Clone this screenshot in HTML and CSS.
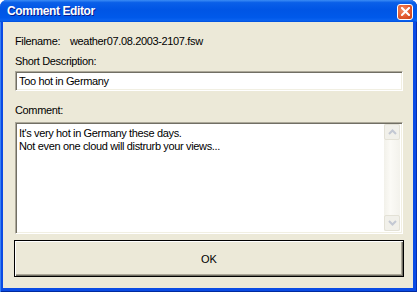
FILE: index.html
```html
<!DOCTYPE html>
<html lang="en">
<head>
  <meta charset="UTF-8" />
  <title>Comment Editor</title>
  <link rel="stylesheet" href="styles.css">
</head>
<body>
  <div class="window">
    <div class="titlebar">
      <span class="title">Comment Editor</span>
      <button class="close" aria-label="Close">
        <svg width="9" height="9" viewBox="0 0 9 9">
          <path d="M1 1 L8 8 M8 1 L1 8" stroke="#fff" stroke-width="2" stroke-linecap="square" />
        </svg>
      </button>
    </div>

    <div class="client">
      <div class="file-row">
        <span class="file-label">Filename:</span>
        <span>weather07.08.2003-2107.fsw</span>
      </div>

      <label class="label label-short" for="shortDesc">Short Description:</label>
      <input class="field" id="shortDesc" type="text" value="Too hot in Germany">

      <label class="label label-comment">Comment:</label>
      <div class="comment-box">
        <div class="comment-text">It's very hot in Germany these days.<br>Not even one cloud will distrurb your views...</div>
        <div class="scrollbar">
          <div class="scroll-btn">
            <svg width="9" height="6" viewBox="0 0 9 6"><path d="M1 5 L4.5 1.5 L8 5" fill="none" stroke="#c3c8d3" stroke-width="2" /></svg>
          </div>
          <div class="scroll-track"></div>
          <div class="scroll-btn">
            <svg width="9" height="6" viewBox="0 0 9 6"><path d="M1 1 L4.5 4.5 L8 1" fill="none" stroke="#c3c8d3" stroke-width="2" /></svg>
          </div>
        </div>
      </div>

      <button class="ok-btn">OK</button>
    </div>
  </div>
</body>
</html>
```

FILE: styles.css
```css
body {
  margin: 0;
  font-family: 'Liberation Sans', Arial, sans-serif;
  font-size: 11px;
  letter-spacing: -0.35px;
  color: #000;
  background: #fff;
}

.window {
  width: 417px;
  height: 292px;
  box-sizing: border-box;
  display: flex;
  flex-direction: column;
  background: #0a4be4;
  border-radius: 7px 7px 0 0;
  box-shadow: inset 1px 0 #3a80f3, inset -1px 0 #002fb8, inset 0 -1px #002a9e;
  overflow: hidden;
}

.titlebar {
  height: 22px;
  flex: none;
  display: flex;
  align-items: center;
  padding: 0 4px 0 7px;
  background: linear-gradient(to bottom, #3b8cf5 0%, #0a5fe8 12%, #0055e5 45%, #0059ea 80%, #0a62f0 92%, #0050dc 100%);
}

.title {
  flex: 1;
  font-size: 12px;
  font-weight: bold;
  letter-spacing: -0.4px;
  color: #fff;
  text-shadow: 1px 1px #0a1a8c;
}

.close {
  width: 16px;
  height: 16px;
  padding: 0;
  margin-top: 1px;
  display: flex;
  align-items: center;
  justify-content: center;
  border: 1px solid #fff;
  border-radius: 3px;
  background: radial-gradient(circle at 35% 35%, #f08a62 0%, #e2582e 55%, #c23d15 100%);
}

.client {
  flex: 1;
  margin: 0 4px 4px 3px;
  padding: 13px 10px 0 12px;
  background: #ece9d8;
  display: flex;
  flex-direction: column;
}

.file-row {
  display: flex;
  line-height: 13px;
}

.file-label {
  width: 55px;
}

.label {
  display: block;
  line-height: 13px;
}

.label-short {
  margin-top: 7px;
}

.label-comment {
  margin-top: 13px;
}

.field {
  margin-top: 3px;
  height: 20px;
  box-sizing: border-box;
  padding: 0 3px;
  font-family: inherit;
  font-size: 11px;
  letter-spacing: -0.35px;
  border: 1px solid;
  border-color: #aca899 #fff #fff #aca899;
  box-shadow: inset 1px 1px #716f64, inset -1px -1px #f1efe2;
  background: #fff;
  outline: none;
}

.comment-box {
  margin-top: 5px;
  height: 112px;
  box-sizing: border-box;
  display: flex;
  border: 1px solid;
  border-color: #aca899 #fff #fff #aca899;
  box-shadow: inset 1px 1px #716f64, inset -1px -1px #f1efe2;
  background: #fff;
  padding: 1px 2px 2px 1px;
}

.comment-text {
  flex: 1;
  padding: 3px 2px;
  line-height: 13px;
}

.scrollbar {
  width: 16px;
  display: flex;
  flex-direction: column;
  background: linear-gradient(to right, #f2f1ea, #fbfaf6 40%, #f3f2ec);
}

.scroll-btn {
  height: 16px;
  box-sizing: border-box;
  display: flex;
  align-items: center;
  justify-content: center;
  border: 1px solid #e3e1d6;
  border-radius: 2px;
  background: #f1f0ea;
}

.scroll-track {
  flex: 1;
}

.ok-btn {
  margin: 6px -1px 0;
  height: 37px;
  font-family: inherit;
  font-size: 11px;
  letter-spacing: 0;
  color: #000;
  background: #ece9d8;
  border: 1px solid #000;
  box-shadow: inset 1px 1px #fff, inset -1px -1px #716f64, inset -2px -2px #aca899;
}
```
